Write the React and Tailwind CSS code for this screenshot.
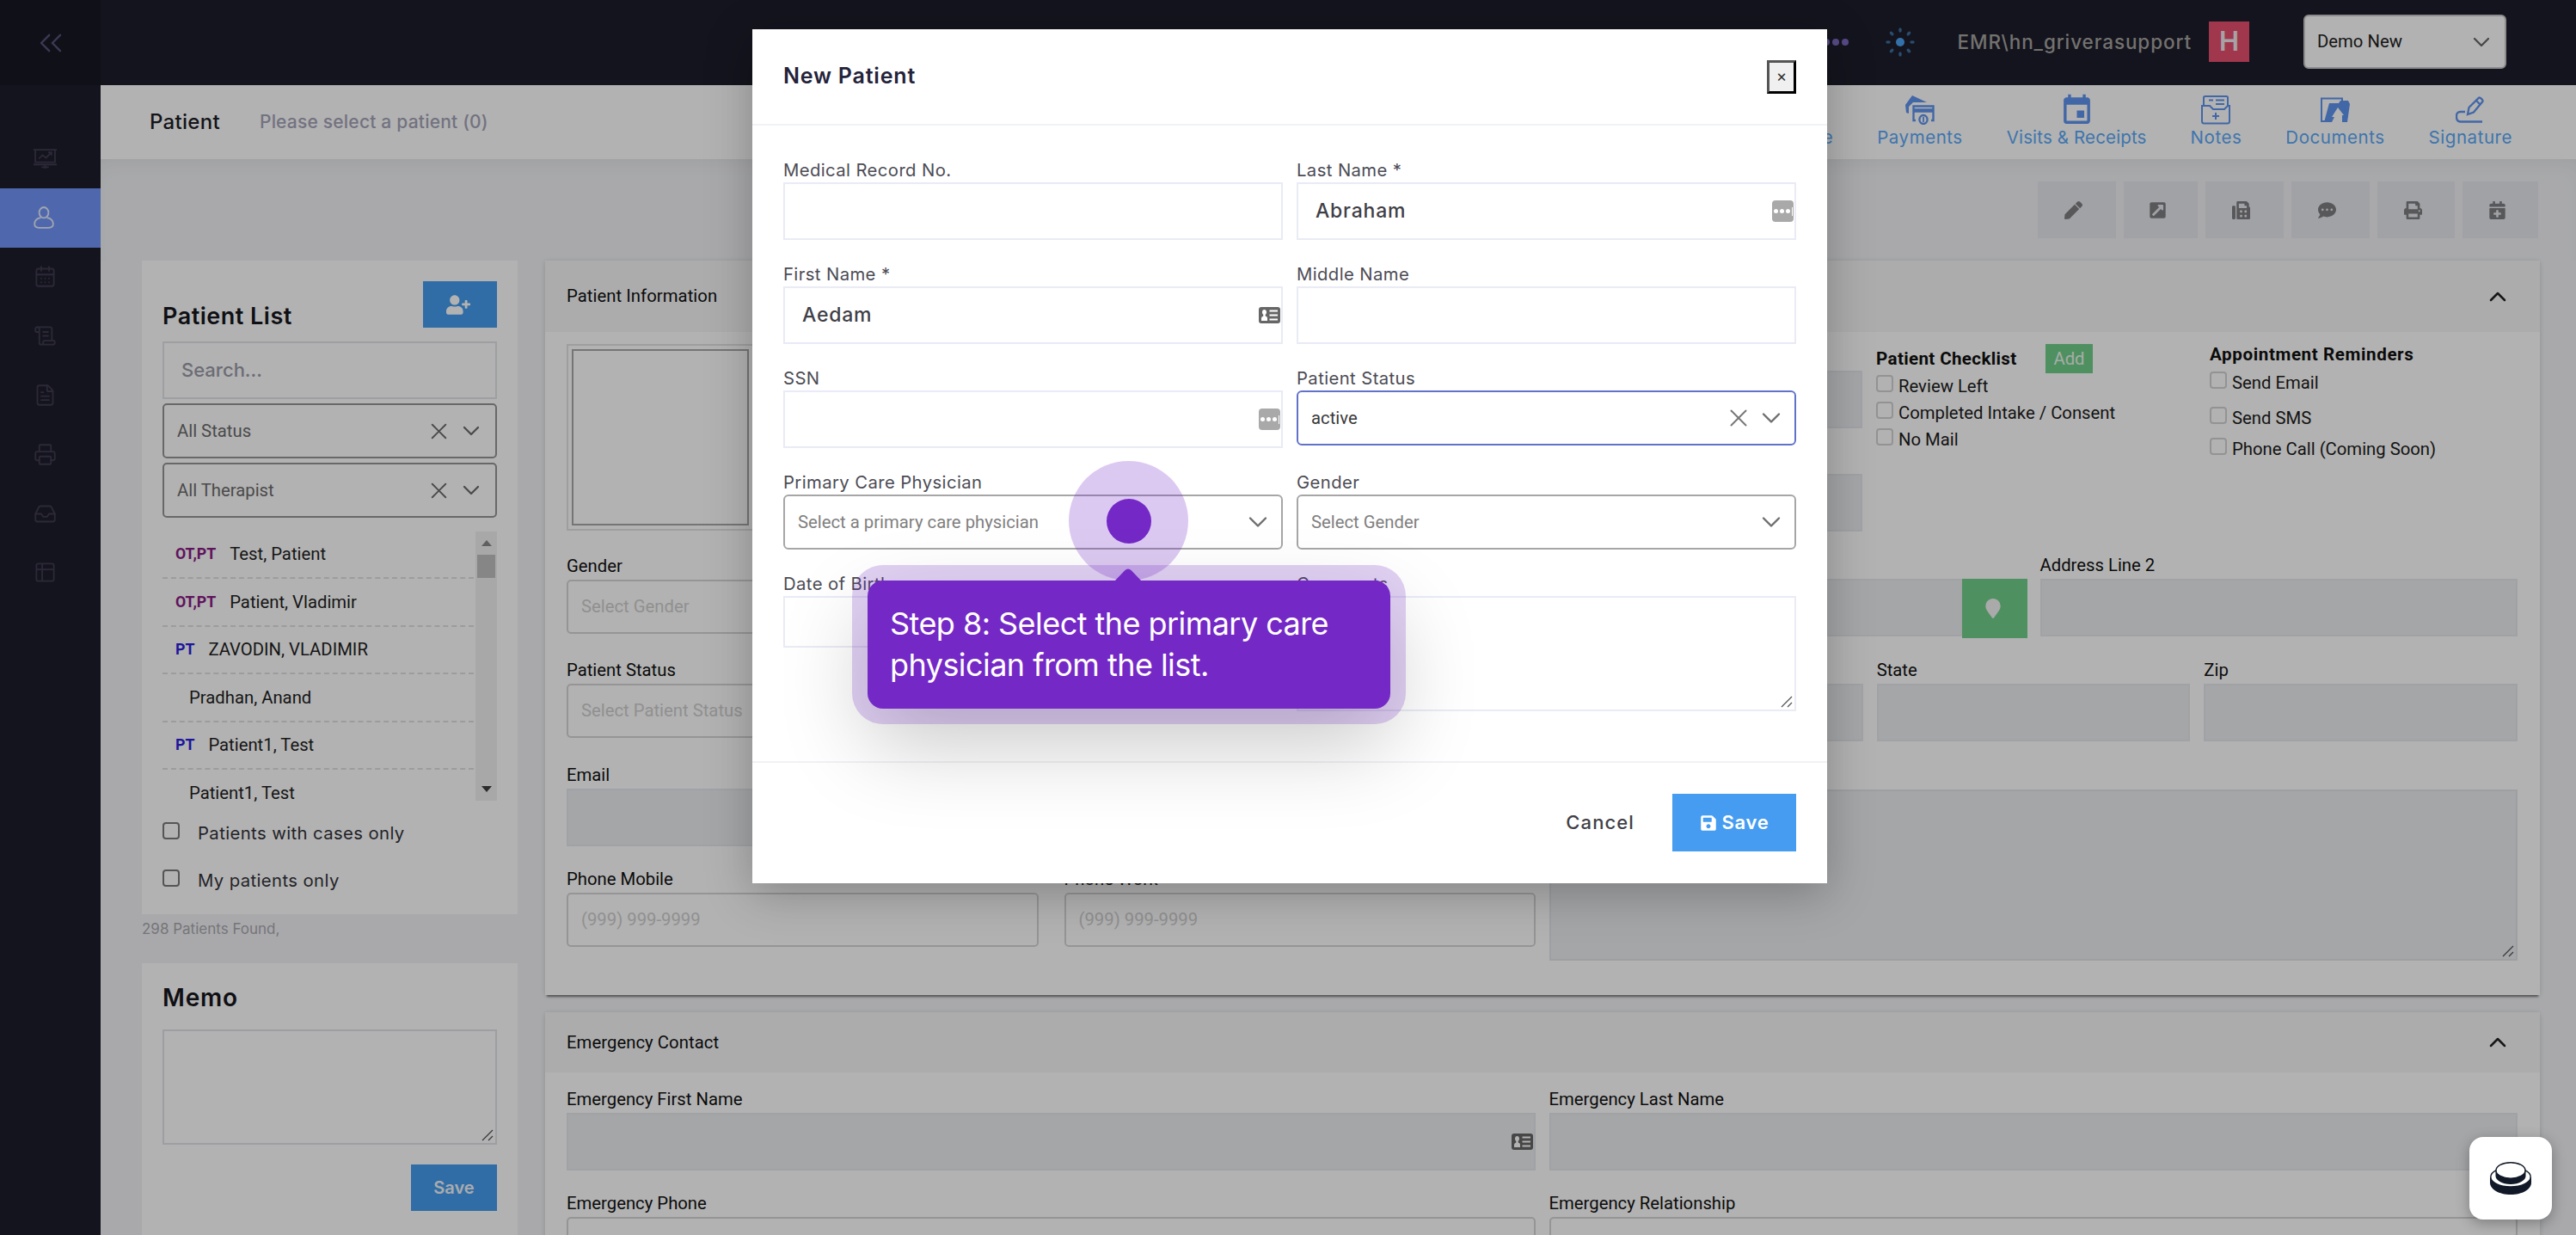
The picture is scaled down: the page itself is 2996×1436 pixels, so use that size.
import { ChevronDown, ChevronUp, ChevronsLeft, X, CalendarDays, ScrollText, FileText, Printer, Inbox, Table2 } from 'lucide-react';
import { FaPen, FaExternalLinkSquareAlt, FaFax, FaCommentDots, FaPrint, FaCalendarPlus, FaUserPlus, FaSave, FaMapMarker } from 'react-icons/fa';
import { MdEvent } from 'react-icons/md';

const PATIENTS = [
  { tag: 'OT,PT', tagStyle: 'text-[#8a1a86]', name: 'Test, Patient' },
  { tag: 'OT,PT', tagStyle: 'text-[#8a1a86]', name: 'Patient, Vladimir' },
  { tag: 'PT', tagStyle: 'text-[#2a1fe0]', name: 'ZAVODIN, VLADIMIR' },
  { name: 'Pradhan, Anand' },
  { tag: 'PT', tagStyle: 'text-[#2a1fe0]', name: 'Patient1, Test' },
  { name: 'Patient1, Test' },
];

const TOOLS = [
  { Icon: FaPen, width: 'w-[91px]' },
  { Icon: FaExternalLinkSquareAlt, width: 'w-[86px]' },
  { Icon: FaFax, width: 'w-[91px]' },
  { Icon: FaCommentDots, width: 'w-[91px]' },
  { Icon: FaPrint, width: 'w-[90px]' },
  { Icon: FaCalendarPlus, width: 'w-[88px]' },
];

/* ---------- icons ---------- */

function ChartBoard({ className }) {
  return (
    <svg viewBox="0 0 26 24" className={className} fill="none" stroke="currentColor" strokeWidth="1.7">
      <path d="M0 2h26M2 2v14h22V2M0 18.500h26M9 21.500h8M13 18v5" />
      <path d="M6 12l4-4 4 3 6-6M16.500 5H20v3.500" />
    </svg>
  );
}

function UserOutline() {
  return (
    <svg viewBox="0 0 24 26" className="w-6 h-[26px]" fill="none" stroke="currentColor" strokeWidth="1.8">
      <ellipse cx="12" cy="7.2" rx="5.4" ry="6.2" />
      <path d="M8.4 13.2C4 14 1.2 17 1.2 20.6c0 3 2.4 4.2 5 4.2h11.6c2.6 0 5-1.2 5-4.2 0-3.6-2.8-6.6-7.2-7.4" />
    </svg>
  );
}

function PaymentsIcon() {
  return (
    <svg viewBox="0 0 34 34" className="w-[34px] h-[34px]" fill="none" stroke="currentColor" strokeWidth="2.4">
      <path d="M1 20 0 11 8 0l17 8H9L4 13v8z" fill="currentColor" stroke="none" />
      <path d="M12 29H9.5V12.5h23V29H30" />
      <path d="M9 17.5h24" strokeWidth="4.5" />
      <ellipse cx="21" cy="28" rx="4.6" ry="5" />
      <path d="M21 25v6" strokeWidth="1.8" />
    </svg>
  );
}

function NotesIcon() {
  return (
    <svg viewBox="0 0 34 34" className="w-[34px] h-[34px]" fill="none" stroke="currentColor" strokeWidth="2">
      <path d="M3 13V2.5C3 1.5 3.5 1 4.5 1h25c1 0 1.5.5 1.5 1.5V13" />
      <path d="M1 12h9l4 4h13l4-4h2v18c0 1.5-1 2.5-2.5 2.5h-27C2 32.5 1 31.5 1 30z" />
      <path d="M9 5.5h5M17 5.5h10M17 10h10M17 20v8M13 24h8" />
    </svg>
  );
}

function DocumentsIcon() {
  return (
    <svg viewBox="0 0 34 30" className="w-[34px] h-[30px]">
      <path d="M8 28H1V1.5h24V6" fill="none" stroke="currentColor" strokeWidth="2" />
      <path d="M10 7h11l2-3h9l2 4-3 21h-6v-8l2 0-7-9-7 11 3 0-3 6H4z" fill="currentColor" />
    </svg>
  );
}

function SignatureIcon() {
  return (
    <svg viewBox="0 0 34 32" className="w-[34px] h-8" fill="none" stroke="currentColor" strokeWidth="2.3">
      <path d="M14 21l1.5-8L27 1.6c1.2-1 5.4 3 4.4 4.4L21 18.5z" />
      <path d="M24 5l5 5" />
      <path d="M11 18H5.500C2.500 18 1 20 1 22.500V24c0 3.500 2 5.500 5 5.500h25" />
    </svg>
  );
}

function IdCard() {
  return (
    <svg viewBox="0 0 25 19" className="w-[25px] h-[19px]">
      <rect width="25" height="19" rx="3" fill="#666" />
      <path d="M3 16v-2.5c0-1.5 1-2.5 2.3-2.9V8.8C4.2 8 4 7 4 6c0-1.800 1-3 2.500-3S9 4.200 9 6c0 1-.2 2-1.300 2.800v1.800C9.500 11 10 12 10 13.500V16z" fill="#fff" />
      <path d="M12.500 4.500H22M12.500 9.500H22M12.500 14.500H22" stroke="#fff" strokeWidth="2" />
    </svg>
  );
}

function Resizer() {
  return (
    <svg viewBox="0 0 14 14" className="w-3.5 h-3.5 self-end" stroke="#555" strokeWidth="1.3">
      <path d="M1 13L13 1M8 13l5-5" />
    </svg>
  );
}

function ButtonLogo() {
  return (
    <svg viewBox="0 0 48 38" className="w-12 h-[38px]">
      <path d="M0 18v6c0 8 10.500 14 24 14s24-6 24-14v-6z" fill="#111827" />
      <ellipse cx="24" cy="17.500" rx="23.200" ry="11.500" fill="#fff" stroke="#111827" strokeWidth="1.400" />
      <path d="M6.500 9.800v6.500C6.500 21.500 14 26 24 26s17.500-4.500 17.500-9.700V9.800z" fill="#111827" />
      <ellipse cx="24" cy="9.900" rx="17" ry="9.200" fill="#fff" stroke="#111827" strokeWidth="1.400" />
    </svg>
  );
}

/* ---------- form parts ---------- */

function Field({ label, className = '', children }) {
  return (
    <div className={`flex flex-col ${className}`}>
      <div className="h-[30px] pb-px flex items-center text-[20.3px] text-[#111] whitespace-nowrap">{label}</div>
      {children}
    </div>
  );
}

function DisabledInput({ children }) {
  return (
    <div className="h-[67px] bg-[#ebeef1] border-2 border-[#e5e8ec] flex items-center justify-end pr-px">{children}</div>
  );
}

function SoftInput({ placeholder }) {
  return (
    <div className="h-[63px] rounded-[5px] border-2 border-[#d6d6d6] flex items-center px-[15px] text-[20.3px] text-[#cfcfcf]">
      {placeholder}
    </div>
  );
}

function FilterSelect({ value, className = '' }) {
  return (
    <div className={`h-16 rounded-[5px] border-2 border-[#969696] flex items-center pl-[15px] pr-3 text-[20.3px] text-[#6c6c6c] [font-family:Roboto,sans-serif] ${className}`}>
      <span className="flex-1">{value}</span>
      <X className="w-[31px] h-[31px] mr-1.5" strokeWidth={1.5} />
      <ChevronDown className="w-8 h-8" strokeWidth={1.7} />
    </div>
  );
}

function Check({ label, className = '' }) {
  return (
    <div className={`flex items-start h-[31px] text-[20.3px] leading-[27px] text-[#1c1c1c] ${className}`}>
      <span className="w-5 h-5 rounded-[4px] border-2 border-[#d3d3d3] mr-1.5" />
      <span className="whitespace-nowrap">{label}</span>
    </div>
  );
}

function ModalField({ label, children }) {
  return (
    <div>
      <div className="h-7 flex items-center text-[20.3px] tracking-[0.4px] text-[#4c4c55] whitespace-nowrap">{label}</div>
      {children}
    </div>
  );
}

function ModalInput({ value, children }) {
  return (
    <div className="h-[67px] border-2 border-[#e9ebf5] flex items-center pl-5 pr-px">
      <span className="flex-1 text-[23px] font-medium tracking-[0.8px] text-[#3f4047]">{value}</span>
      {children}
    </div>
  );
}

function ModalSelect({ value, placeholder, active }) {
  return (
    <div className={`h-16 rounded-[6px] border-2 flex items-center pl-[15px] pr-[9px] text-[20.3px] [font-family:Roboto,sans-serif] ${active ? 'border-[#6272cb]' : 'border-[#a6a6a6]'}`}>
      <span className={`flex-1 ${value ? 'text-[#3a3a3a]' : 'text-[#808080]'}`}>{value || placeholder}</span>
      {active && <X className="w-[34px] h-[34px] mr-[3px] text-[#777]" strokeWidth={1.4} />}
      <ChevronDown className="w-9 h-9 text-[#6e6e6e]" strokeWidth={1.6} />
    </div>
  );
}

function PasswordBadge() {
  return (
    <span className="w-[25px] h-[25px] rounded-[4px] bg-[#a9a9a9] flex items-center justify-center gap-[2px]">
      <i className="w-[5px] h-[5px] rounded-full bg-white" />
      <i className="w-[5px] h-[5px] rounded-full bg-white" />
      <i className="w-[5px] h-[5px] rounded-full bg-white" />
      <i className="w-px h-2.5 bg-white" />
    </span>
  );
}

/* ---------- page shell ---------- */

function Sidebar() {
  const icons = [ChartBoard, UserOutline, CalendarDays, ScrollText, FileText, Printer, Inbox, Table2];
  return (
    <aside className="w-[117px] shrink-0 bg-[#1e1d2b] flex flex-col">
      <div className="h-[99px] bg-[#171824] flex items-center justify-center text-[#565277]">
        <ChevronsLeft className="w-11 h-11" strokeWidth={1.3} />
      </div>
      <div className="pt-[51px]">
        {icons.map((Icon, i) => (
          <div
            key={i}
            className={`h-[68.8px] flex items-center pl-[39px] ${i === 1 ? 'bg-[#7196f8] text-[#e9ecfb]' : 'text-[#3f3c50]'}`}
          >
            <Icon className="w-[27px] h-[27px]" strokeWidth={1.6} />
          </div>
        ))}
      </div>
    </aside>
  );
}

function TopBar() {
  return (
    <header className="h-[99px] bg-[#1e1d2b] flex items-center justify-end pr-[81px] pb-0.5">
      <div className="flex gap-[3px]">
        {[0, 1, 2].map(i => <i key={i} className="w-2 h-2 rounded-full bg-[#7d6bc0]" />)}
      </div>
      <svg viewBox="-18 -18 36 36" className="w-9 h-9 ml-[42px]">
        <circle r="5" fill="#4aa3f5" />
        {[0, 45, 90, 135, 180, 225, 270, 315].map(a => (
          <ellipse key={a} cx="0" cy="-14" rx="1.8" ry="2.8" fill="#3a6f9f" transform={`rotate(${a})`} />
        ))}
      </svg>
      <span className="ml-[49px] text-[22.5px] font-medium tracking-[0.9px] text-[#a5a4a0] whitespace-nowrap">EMR\hn_griverasupport</span>
      <span className="ml-[20px] w-[47px] h-[47px] bg-[#e54f6f] text-[#f0e9ec] text-[31px] font-semibold flex items-center justify-center">H</span>
      <div className="ml-[63px] w-[236px] h-[63px] rounded-[6px] bg-white border-2 border-[#c9c9c9] flex items-center pl-3.5 pr-[11px] [font-family:Roboto,sans-serif] text-[20.3px] text-[#222]">
        <span className="flex-1">Demo New</span>
        <ChevronDown className="w-8 h-8 text-[#666]" strokeWidth={1.7} />
      </div>
    </header>
  );
}

function TitleBar() {
  const links = [
    { label: 'Insurance', icon: <span className="h-[34px]" /> },
    { label: 'Payments', icon: <PaymentsIcon /> },
    { label: 'Visits & Receipts', icon: <MdEvent className="w-[41px] h-[41px] -my-[3px]" />, tight: true },
    { label: 'Notes', icon: <NotesIcon /> },
    { label: 'Documents', icon: <DocumentsIcon /> },
    { label: 'Signature', icon: <SignatureIcon /> },
  ];
  return (
    <div className="h-[86px] bg-white flex items-center pl-[57px] pr-[74px]">
      <h1 className="text-[24px] font-medium tracking-[0.3px] text-[#1d1d26]">Patient</h1>
      <span className="ml-[46px] flex-1 text-[21px] font-medium tracking-[0.2px] text-[#a4a4b8]">Please select a patient (0)</span>
      <nav className="flex gap-[51px]">
        {links.map(l => (
          <div key={l.label} className="flex flex-col items-center text-[#5f94ee]">
            <div className="h-[36px] flex items-center">{l.icon}</div>
            <span className={`text-[20.5px] leading-[28px] text-[#5aa8f8] whitespace-nowrap ${l.tight ? 'tracking-[0.15px]' : 'tracking-[0.55px]'}`}>
              {l.label}
            </span>
          </div>
        ))}
      </nav>
    </div>
  );
}

function PatientList() {
  return (
    <section className="h-[760px] bg-white px-6 pt-6 flex flex-col">
      <div className="h-[70px] flex items-start justify-between">
        <h2 className="text-[27px] font-semibold tracking-[0.5px] text-[#16161d] mt-[25px] leading-8">Patient List</h2>
        <span className="w-[86px] h-[54px] bg-[#459dee] text-white flex items-center justify-center pr-1">
          <FaUserPlus className="w-7 h-[23px]" />
        </span>
      </div>
      <div className="h-[67px] border-2 border-[#e3e4e9] flex items-center px-5 text-[22px] font-medium text-[#9a9ba8]">Search...</div>
      <FilterSelect value="All Status" className="mt-[5px]" />
      <FilterSelect value="All Therapist" className="mt-[5px]" />

      <div className="mt-4 h-[320px] flex overflow-hidden [font-family:Roboto,sans-serif]">
        <div className="flex-1">
          {PATIENTS.map((p, i) => (
            <div key={i} className="h-[55.4px] border-b-2 border-dashed border-[#e0e0e0] last:border-0 flex items-center pl-[15px] text-[20.3px] text-[#1f1f1f]">
              {p.tag && <b className={`text-[17.7px] ${p.tagStyle}`}>{p.tag}</b>}
              <span className="ml-4">{p.name}</span>
            </div>
          ))}
        </div>
        <div className="ml-0.5 w-[25px] h-[313px] bg-[#f1f1f1] flex flex-col items-center py-[10px]">
          <i className="border-x-[6px] border-x-transparent border-b-[7px] border-b-[#8a8a8a]" />
          <i className="mt-2.5 w-[21px] h-[27px] bg-[#c1c1c1]" />
          <i className="mt-auto border-x-[6px] border-x-transparent border-t-[7px] border-t-[#404040]" />
        </div>
      </div>

      <div className="mt-1">
        {['Patients with cases only', 'My patients only'].map(label => (
          <div key={label} className="h-[54.5px] flex items-center">
            <span className="w-5 h-5 -mt-1.5 rounded-[4px] border-2 border-[#7a7a7a]" />
            <span className="ml-[21px] text-[20.3px] tracking-[0.4px] text-[#33333b]">{label}</span>
          </div>
        ))}
      </div>
    </section>
  );
}

function Memo() {
  return (
    <section className="h-[340px] bg-white px-6 pt-6">
      <h2 className="text-[28px] font-semibold tracking-[0.8px] text-[#16161d] leading-8">Memo</h2>
      <div className="mt-[21px] h-[134px] border-2 border-[#e1e2ea] flex justify-end p-0.5"><Resizer /></div>
      <div className="mt-[23px] ml-auto w-[100px] h-[54px] bg-[#459dee] text-[#f2f5fa] text-[20px] font-semibold flex items-center justify-center">Save</div>
    </section>
  );
}

function Panel({ title, className = '', headClass = 'h-[83px]', children }) {
  return (
    <section className={`bg-white shadow-[0_4px_2px_-2px_rgba(0,0,0,0.45),0_1px_6px_rgba(0,0,0,0.15)] ${className}`}>
      <div className={`bg-[#f6f7f8] flex items-center justify-between pl-[25px] pr-[33px] text-[20.3px] tracking-[0.05px] text-[#111] ${headClass}`}>
        <span>{title}</span>
        <ChevronUp className="w-8 h-8 text-[#222]" strokeWidth={1.9} />
      </div>
      {children}
    </section>
  );
}

function PatientInformation() {
  return (
    <Panel title="Patient Information" className="h-[854px]">
      <div className="flex gap-4 pl-[25px] pr-[26px]">
        <div className="w-[1127px] shrink-0">
          <div className="mt-3.5 w-[218px] h-[217px] border-2 border-[#e2e2e2] p-1">
            <div className="h-full border-2 border-[#a8a8a8]" />
          </div>
          <Field label="Gender" className="mt-[27px] w-[549px]"><SoftInput placeholder="Select Gender" /></Field>
          <Field label="Patient Status" className="mt-7 w-[549px]"><SoftInput placeholder="Select Patient Status" /></Field>
          <Field label="Email" className="mt-[29px]"><DisabledInput /></Field>
          <div className="mt-6 grid grid-cols-2 gap-[30px]">
            <Field label="Phone Mobile"><SoftInput placeholder="(999) 999-9999" /></Field>
            <Field label="Phone Work"><SoftInput placeholder="(999) 999-9999" /></Field>
          </div>
        </div>

        <div className="flex-1">
          <div className="h-[257px] flex">
            <div className="w-[364px] pt-[15px]">
              <Field><DisabledInput /></Field>
              <Field className="mt-[23px]"><DisabledInput /></Field>
            </div>
            <div className="ml-4 w-[388px] pt-3.5">
              <div className="h-[34px] flex items-center">
                <b className="text-[20.6px] tracking-[0.35px] text-[#111] whitespace-nowrap">Patient Checklist</b>
                <span className="ml-auto mr-[136px] w-[55px] h-[34px] bg-[#71cf8b] text-[#eef7f0] text-[20.3px] flex items-center justify-center">Add</span>
              </div>
              <Check label="Review Left" className="mt-0.5" />
              <Check label="Completed Intake / Consent" />
              <Check label="No Mail" />
            </div>
            <div className="pt-[11px]">
              <b className="block text-[20.6px] tracking-[0.6px] leading-[31px] text-[#111]">Appointment Reminders</b>
              <Check label="Send Email" className="mt-[4px]" />
              <Check label="Send SMS" className="mt-[10px]" />
              <Check label="Phone Call (Coming Soon)" className="mt-[5px]" />
            </div>
          </div>

          <div className="grid grid-cols-2 gap-[15px]">
            <Field>
              <div className="flex">
                <div className="flex-1"><DisabledInput /></div>
                <span className="w-[76px] h-[69px] bg-[#71cf8b] text-[#f4f4f4] flex items-center justify-center pr-1">
                  <FaMapMarker className="w-[18px] h-[23px]" />
                </span>
              </div>
            </Field>
            <Field label="Address Line 2"><DisabledInput /></Field>
          </div>
          <div className="mt-[23px] grid grid-cols-3 gap-4">
            <Field><DisabledInput /></Field>
            <Field label="State"><DisabledInput /></Field>
            <Field label="Zip"><DisabledInput /></Field>
          </div>
          <Field className="mt-[26px]">
            <div className="h-[199px] bg-[#ebeef1] border-2 border-[#e1e4e9] flex justify-end p-0.5"><Resizer /></div>
          </Field>
        </div>
      </div>
    </Panel>
  );
}

function EmergencyContact() {
  return (
    <Panel title="Emergency Contact" className="mt-[20px] h-[300px]" headClass="h-[70px]">
      <div className="pt-[17px] pl-[25px] pr-[26px] grid grid-cols-2 gap-x-4 gap-y-6">
        <Field label="Emergency First Name">
          <DisabledInput><IdCard /></DisabledInput>
        </Field>
        <Field label="Emergency Last Name"><DisabledInput /></Field>
        <Field label="Emergency Phone"><SoftInput /></Field>
        <Field label="Emergency Relationship"><SoftInput /></Field>
      </div>
    </Panel>
  );
}

/* ---------- dialog ---------- */

function NewPatientModal() {
  return (
    <div className="w-[1250px] h-[993px] bg-white shadow-[0_12px_50px_rgba(0,0,0,0.25)] flex flex-col">
      <div className="h-[112px] border-b-2 border-[#f1f2f5] flex items-center justify-between px-9">
        <h2 className="text-[25px] font-semibold tracking-[0.8px] text-[#24233a]">New Patient</h2>
        <span className="w-[34px] h-[39px] bg-[#f0f0f0] border-[3px] border-t-[#555] border-l-[#555] border-r-black border-b-black text-[19px] leading-none text-[#333] flex items-center justify-center pb-0.5">×</span>
      </div>

      <div className="flex-1 px-9 pt-[38px] grid grid-cols-2 gap-x-4 gap-y-[26px] content-start">
        <ModalField label="Medical Record No."><ModalInput /></ModalField>
        <ModalField label="Last Name *"><ModalInput value="Abraham"><PasswordBadge /></ModalInput></ModalField>
        <ModalField label="First Name *"><ModalInput value="Aedam"><IdCard /></ModalInput></ModalField>
        <ModalField label="Middle Name"><ModalInput /></ModalField>
        <ModalField label="SSN"><ModalInput><PasswordBadge /></ModalInput></ModalField>
        <ModalField label="Patient Status"><ModalSelect value="active" active /></ModalField>
        <ModalField label="Primary Care Physician"><ModalSelect placeholder="Select a primary care physician" /></ModalField>
        <ModalField label="Gender"><ModalSelect placeholder="Select Gender" /></ModalField>
        <ModalField label="Date of Birth"><div className="h-[60px] border-2 border-[#e9ebf5]" /></ModalField>
        <ModalField label="Comments">
          <div className="h-[134px] border-2 border-[#e9ebf5] flex justify-end p-0.5"><Resizer /></div>
        </ModalField>
      </div>

      <div className="h-[142px] border-t-2 border-[#f1f2f5] flex items-center justify-end px-9 pb-px">
        <span className="text-[22px] font-medium tracking-[1.1px] text-[#3f4047]">Cancel</span>
        <span className="ml-[44px] w-[144px] h-[67px] bg-[#459cf0] text-white text-[22px] font-semibold tracking-[0.7px] flex items-center justify-center gap-[6px]">
          <FaSave className="w-5 h-5" />
          Save
        </span>
      </div>
    </div>
  );
}

function StepCallout() {
  return (
    <>
      <div className="absolute left-[1243px] top-[536px] w-[139px] h-[139px] rounded-full bg-[#7428c6]/25 flex items-center justify-center">
        <i className="w-[52px] h-[52px] rounded-full bg-[#7428c6]" />
      </div>
      <div className="absolute left-[1009px] top-[675px] w-[608px] h-[149px] rounded-[18px] bg-[#7428c6] shadow-[0_0_0_18px_rgba(116,40,198,0.22),0_40px_100px_rgba(0,0,0,0.22)] pl-[26px] pt-[26px] text-white text-[36px] leading-[48px] tracking-[-0.55px]">
        Step 8: Select the primary care<br />physician from the list.
        <svg viewBox="0 0 32 15" className="absolute left-[287px] -top-3.5 w-8 h-[15px]">
          <path d="M0 15L12 2.5Q16-1.5 20 2.5L32 15z" fill="#7428c6" />
        </svg>
      </div>
    </>
  );
}

export default function App() {
  return (
    <div className="relative w-[2996px] h-[1436px] overflow-hidden bg-[#f2f3f6] [font-family:Inter,sans-serif]">
      <div className="flex h-full">
        <Sidebar />
        <div className="flex-1 min-w-0">
          <TopBar />
          <TitleBar />
          <div className="h-[118px] pt-[26px] pr-11 flex justify-end gap-[9px] shadow-[inset_0_14px_30px_-14px_rgba(0,0,0,0.08)]">
            {TOOLS.map(({ Icon, width }, i) => (
              <span key={i} className={`${width} h-[66px] bg-[#e6e8ec] flex items-center justify-center pr-2 text-[#7f7f83]`}>
                <Icon className="w-[21px] h-[21px]" />
              </span>
            ))}
          </div>
          <main className="flex pl-12 pr-[42px]">
            <div className="w-[437px] shrink-0">
              <PatientList />
              <div className="h-[57px] pt-[5px] text-[17px] text-[#a9a9ae]">298 Patients Found,</div>
              <Memo />
            </div>
            <div className="ml-8 flex-1 min-w-0 [font-family:Roboto,sans-serif]">
              <PatientInformation />
              <EmergencyContact />
            </div>
          </main>
        </div>
      </div>

      <div className="absolute inset-0 bg-black/30 flex items-start justify-center pt-[34px] pl-1">
        <NewPatientModal />
      </div>

      <StepCallout />

      <div className="absolute right-7 bottom-[18px] w-24 h-24 rounded-[16px] bg-white shadow-[0_4px_16px_rgba(0,0,0,0.3)] flex items-center justify-center">
        <ButtonLogo />
      </div>
    </div>
  );
}
